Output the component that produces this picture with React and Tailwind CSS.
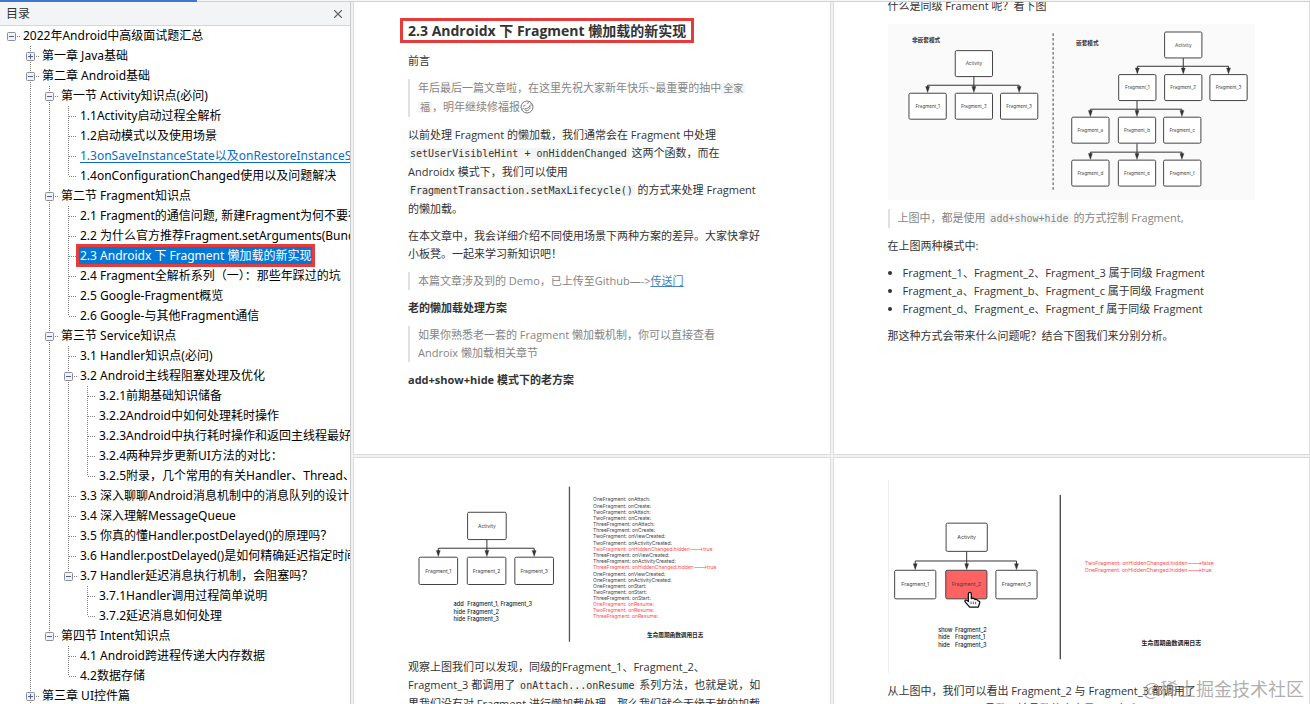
import React, { useState } from "react";
import { X } from "lucide-react";

const OUTLINE = [
  {
    title: "2022年Android中高级面试题汇总",
    children: [
      { title: "第一章 Java基础", collapsed: true },
      {
        title: "第二章 Android基础",
        children: [
          {
            title: "第一节 Activity知识点(必问)",
            children: [
              { title: "1.1Activity启动过程全解析" },
              { title: "1.2启动模式以及使用场景" },
              { title: "1.3onSaveInstanceState以及onRestoreInstanceState使用", hot: true },
              { title: "1.4onConfigurationChanged使用以及问题解决" },
            ],
          },
          {
            title: "第二节 Fragment知识点",
            children: [
              { title: "2.1 Fragment的通信问题, 新建Fragment为何不要在构造方法中传递参数" },
              { title: "2.2 为什么官方推荐Fragment.setArguments(Bundle bundle)" },
              { title: "2.3 Androidx 下 Fragment 懒加载的新实现", selected: true },
              { title: "2.4 Fragment全解析系列（一）：那些年踩过的坑" },
              { title: "2.5 Google-Fragment概览" },
              { title: "2.6 Google-与其他Fragment通信" },
            ],
          },
          {
            title: "第三节 Service知识点",
            children: [
              { title: "3.1 Handler知识点(必问)" },
              {
                title: "3.2 Android主线程阻塞处理及优化",
                children: [
                  { title: "3.2.1前期基础知识储备" },
                  { title: "3.2.2Android中如何处理耗时操作" },
                  { title: "3.2.3Android中执行耗时操作和返回主线程最好的方式" },
                  { title: "3.2.4两种异步更新UI方法的对比：" },
                  { title: "3.2.5附录，几个常用的有关Handler、Thread、Looper" },
                ],
              },
              { title: "3.3 深入聊聊Android消息机制中的消息队列的设计" },
              { title: "3.4 深入理解MessageQueue" },
              { title: "3.5 你真的懂Handler.postDelayed()的原理吗？" },
              { title: "3.6 Handler.postDelayed()是如何精确延迟指定时间的" },
              {
                title: "3.7 Handler延迟消息执行机制，会阻塞吗？",
                children: [
                  { title: "3.7.1Handler调用过程简单说明" },
                  { title: "3.7.2延迟消息如何处理" },
                ],
              },
            ],
          },
          {
            title: "第四节 Intent知识点",
            children: [
              { title: "4.1 Android跨进程传递大内存数据" },
              { title: "4.2数据存储" },
            ],
          },
        ],
      },
      { title: "第三章 UI控件篇", collapsed: true },
      { title: "第四章 网络通信篇", collapsed: true },
    ],
  },
];

const LOG_LINES = [
  { text: "OneFragment: onAttach:" },
  { text: "OneFragment: onCreate:" },
  { text: "TwoFragment: onAttach:" },
  { text: "TwoFragment: onCreate:" },
  { text: "ThreeFragment: onAttach:" },
  { text: "ThreeFragment: onCreate:" },
  { text: "TwoFragment: onViewCreated:" },
  { text: "TwoFragment: onActivityCreated:" },
  { text: "TwoFragment: onHiddenChanged:hidden--->true", red: true },
  { text: "ThreeFragment: onViewCreated:" },
  { text: "ThreeFragment: onActivityCreated:" },
  { text: "ThreeFragment: onHiddenChanged:hidden--->true", red: true },
  { text: "OneFragment: onViewCreated:" },
  { text: "OneFragment: onActivityCreated:" },
  { text: "OneFragment: onStart:" },
  { text: "TwoFragment: onStart:" },
  { text: "ThreeFragment: onStart:" },
  { text: "OneFragment: onResume:", red: true },
  { text: "TwoFragment: onResume:", red: true },
  { text: "ThreeFragment: onResume:", red: true },
];

/* ---------- outline tree ---------- */

// One 19x20 step of dotted guide lines: up / down are the vertical halves,
// across is the stub that leads to the title.
function Guide({ up, down, across }) {
  return (
    <svg width="19" height="20" className="shrink-0" stroke="#808080" strokeDasharray="1 1" aria-hidden="true">
      {up && <path d="M9.5 0V10" />}
      {down && <path d="M9.5 10V20" />}
      {across && <path d="M10 10.5H18" />}
    </svg>
  );
}

function ToggleBox({ open, up, down }) {
  return (
    <svg width="19" height="20" aria-hidden="true">
      <g stroke="#808080" strokeDasharray="1 1">
        {up && <path d="M9.5 0V6" />}
        {down && <path d="M9.5 16V20" />}
        <path d="M15 10.5H19" />
      </g>
      <rect x="5.5" y="6.5" width="8" height="8" rx="1" fill="#f3f3f5" stroke="#8d8d93" />
      <path d="M7 10.5H12" stroke="#4a5fb0" />
      {!open && <path d="M9.5 8V13" stroke="#4a5fb0" />}
    </svg>
  );
}

function TreeNode({ node, rails, last, root }) {
  const [open, setOpen] = useState(!node.collapsed);
  const expandable = node.collapsed || Boolean(node.children);
  const childRails = root ? rails.concat(false) : rails.concat(!last);

  let tone = "text-black";
  if (node.hot) tone = "text-[#0a6cc4] underline underline-offset-2";
  if (node.selected) tone = "bg-[#0078d7] text-white outline-3 outline-[#e53b3b]";

  return (
    <li>
      <div className="flex h-5 items-start">
        {rails.map((on, i) => (
          <Guide key={i} up={on} down={on} />
        ))}
        {expandable ? (
          <button type="button" aria-label={`展开 ${node.title}`} className="shrink-0" onClick={() => setOpen(!open)}>
            <ToggleBox open={open} up={!root} down={!root && !last} />
          </button>
        ) : (
          <Guide up down={!last} across />
        )}
        <a href="#" className={`mt-px ml-px px-px leading-[17px] whitespace-nowrap ${tone}`}>{node.title}</a>
      </div>
      {open && node.children && (
        <ul>
          {node.children.map((child, i) => (
            <TreeNode key={child.title} node={child} rails={childRails} last={i === node.children.length - 1} />
          ))}
        </ul>
      )}
    </li>
  );
}

function Sidebar() {
  return (
    <aside className="flex w-[351px] shrink-0 flex-col overflow-hidden border-r border-[#c8cbce] bg-white font-['Noto_Sans','Noto_Sans_CJK_SC',sans-serif] text-[12px]">
      <header className="flex h-6 shrink-0 items-center justify-between border-b border-[#d5d8da] bg-[#f2f4f6] pr-[5px] pl-1.5 text-[#333]">
        <h1>目录</h1>
        <button type="button" aria-label="关闭目录" className="text-[#666]">
          <X size={14} strokeWidth={2} />
        </button>
      </header>
      <ul className="pl-0.5">
        {OUTLINE.map((node) => (
          <TreeNode key={node.title} node={node} rails={[]} last root />
        ))}
      </ul>
    </aside>
  );
}

/* ---------- document pieces ---------- */

function Page({ className = "", children }) {
  return (
    <article className={`flex flex-col gap-[9px] border-[#dcdcdc] bg-white px-[54px] whitespace-nowrap ${className}`}>
      {children}
    </article>
  );
}

function Quote({ children }) {
  return <blockquote className="border-l-2 border-[#dfe2e5] pl-2 text-[#858585]">{children}</blockquote>;
}

function Code({ children }) {
  return (
    <code className="rounded-xs bg-[#f3f4f4] px-0.5 font-['DejaVu_Sans_Mono','Noto_Sans_CJK_SC',monospace] text-[10px] leading-[19px]">
      {children}
    </code>
  );
}

function LaughIcon() {
  return (
    <svg width="14" height="14" viewBox="0 0 14 14" className="inline-block align-[-3px]" fill="none" stroke="#777" aria-hidden="true">
      <circle cx="7" cy="7" r="6" />
      <path d="M3 6.500l2.500-1.500M7 3.500l2-1M5 8.500c2 .5 4-.5 5-3 .8 3-1.500 5.500-4 5.200-1-.2-1.200-1.200-1-2.200z" strokeWidth=".9" />
      <path d="M2 9.500l2-1.500M10.500 3.500l1 2" strokeWidth=".8" />
    </svg>
  );
}

/* ---------- diagrams ---------- */

function Box({ x, y, w = 112, h = 78, size = 14, fill = "#fff", label }) {
  return (
    <g>
      <rect x={x} y={y} width={w} height={h} rx="4" fill={fill} stroke="#444" strokeWidth="3" />
      <text x={x + w / 2} y={y + h / 2 + 5} fontSize={size} textAnchor="middle" fill="#444">{label}</text>
    </g>
  );
}

// Parent line going down to a bus, then one arrow per target.
function Fork({ x, from, bus, to, targets }) {
  return (
    <g stroke="#333" strokeWidth="3" fill="none">
      <path d={`M${x} ${from}V${bus}M${targets[0]} ${bus}H${targets[targets.length - 1]}`} />
      {targets.map((t) => (
        <g key={t}>
          <path d={`M${t} ${bus}V${to - 12}`} />
          <path d={`M${t - 6} ${to - 20}h12l-6 18z`} fill="#333" strokeWidth="1" />
        </g>
      ))}
    </g>
  );
}

const SVG_FONT = "block w-full font-['Inter','Noto_Sans_CJK_SC',sans-serif]";

function ModesDiagram() {
  return (
    <svg viewBox="0 0 1104 528" className={`${SVG_FONT} bg-[#fafafa]`} role="img" aria-label="非嵌套模式与嵌套模式">
      <text x="72" y="55" fontSize="17" fontWeight="bold" fill="#333">非嵌套模式</text>
      <text x="565" y="62" fontSize="17" fontWeight="bold" fill="#333">嵌套模式</text>
      <path d="M496 28V500" stroke="#444" strokeWidth="3" strokeDasharray="8 6" />

      <Fork x={258} from={158} bus={184} to={208} targets={[119, 258, 394]} />
      <Box x={202} y={80} label="Activity" />
      <Box x={63} y={208} label="Fragment_1" />
      <Box x={202} y={208} label="Fragment_2" />
      <Box x={338} y={208} label="Fragment_3" />

      <Fork x={887} from={102} bus={127} to={152} targets={[749, 887, 1023]} />
      <Fork x={748} from={230} bus={256} to={280} targets={[608, 748, 883]} />
      <Fork x={748} from={358} bus={385} to={409} targets={[608, 748, 883]} />
      <Box x={831} y={24} label="Activity" />
      <Box x={693} y={152} label="Fragment_1" />
      <Box x={831} y={152} label="Fragment_2" />
      <Box x={967} y={152} label="Fragment_3" />
      <Box x={552} y={280} label="Fragment_a" />
      <Box x={692} y={280} label="Fragment_b" />
      <Box x={828} y={280} label="Fragment_c" />
      <Box x={552} y={409} label="Fragment_d" />
      <Box x={692} y={409} label="Fragment_e" />
      <Box x={828} y={409} label="Fragment_f" />
    </svg>
  );
}

function AddDiagram() {
  return (
    <svg viewBox="0 0 1104 531" className={SVG_FONT} role="img" aria-label="add 之后的生命周期">
      <Fork x={237} from={203} bus={229} to={256} targets={[91, 237, 379]} />
      <Box x={179} y={121} w={116} h={82} size={15} label="Activity" />
      <Box x={33} y={256} w={116} h={82} size={15} label="Fragment_1" />
      <Box x={178} y={256} w={116} h={82} size={15} label="Fragment_2" />
      <Box x={321} y={256} w={116} h={82} size={15} label="Fragment_3" />
      <g fontSize="17" fontWeight="500" fill="#222">
        <text x="137" y="404">add</text>
        <text x="178" y="404">Fragment_1, Fragment_3</text>
        <text x="137" y="426">hide</text>
        <text x="178" y="426">Fragment_2</text>
        <text x="137" y="448">hide</text>
        <text x="178" y="448">Fragment_3</text>
      </g>
      <path d="M485 44V510" stroke="#555" strokeWidth="4" />
      {LOG_LINES.map((line, i) => (
        <text key={line.text} x="556" y={88 + Math.round(i * 18.55)} fontSize="15" fill={line.red ? "#ff4d4f" : "#444"}>
          {line.text}
        </text>
      ))}
      <text x="718" y="497" fontSize="17" fontWeight="bold" fill="#222">生命周期函数调用日志</text>
    </svg>
  );
}

function ShowDiagram() {
  return (
    <svg viewBox="0 0 1104 582" className={`${SVG_FONT} border-l border-[#eee]`} role="img" aria-label="show 之后的生命周期">
      <Fork x={234} from={215} bus={244} to={272} targets={[79, 234, 384]} />
      <Box x={172} y={130} w={124} h={85} size={16} label="Activity" />
      <Box x={17} y={272} w={124} h={86} size={16} label="Fragment_1" />
      <Box x={171} y={272} w={124} h={86} size={16} fill="#ff6263" label="Fragment_2" />
      <Box x={322} y={272} w={124} h={86} size={16} label="Fragment_3" />
      <path
        d="M239 366v-22c0-7 9-7 9 0v13c8-2 10 0 11 3 6-1 8 1 9 4 5 0 6 3 5 7l-4 12h-26l-13-15c-4-5 2-10 9-2z"
        fill="#fff"
        stroke="#111"
        strokeWidth="4"
        strokeLinejoin="round"
      />
      <path d="M247 366v8M254 366v8M261 367v7" stroke="#111" strokeWidth="2" />
      <g fontSize="17" fontWeight="500" fill="#222">
        <text x="148" y="457">show</text>
        <text x="199" y="457">Fragment_2</text>
        <text x="148" y="480">hide</text>
        <text x="199" y="480">Fragment_1</text>
        <text x="148" y="503">hide</text>
        <text x="199" y="503">Fragment_3</text>
      </g>
      <path d="M516 45V540" stroke="#444" strokeWidth="4" />
      <text x="590" y="257" fontSize="16" fill="#ff4d4f">TwoFragment: onHiddenChanged:hidden--->false</text>
      <text x="590" y="277" fontSize="16" fill="#ff4d4f">OneFragment: onHiddenChanged:hidden--->true</text>
      <text x="761" y="496" fontSize="18" fontWeight="bold" fill="#222">生命周期函数调用日志</text>
    </svg>
  );
}

/* ---------- reader ---------- */

function Reader() {
  return (
    <main className="grid min-w-0 flex-1 auto-rows-max grid-cols-2 gap-0.5 overflow-hidden bg-[#f1f1f1] pl-0.5 font-['Open_Sans','Noto_Sans_CJK_SC',sans-serif] text-[11px] leading-[18px] text-[#333]">
      <Page className="border-x border-b pt-4 pb-[65px]">
        <h2 className="-ml-2 w-fit border-3 border-[#e53b3b] px-[5px] text-[14px] leading-[19px] font-bold">
          2.3 Androidx 下 Fragment 懒加载的新实现
        </h2>
        <p>前言</p>
        <Quote>
          年后最后一篇文章啦，在这里先祝大家新年快乐~最重要的抽中<Code>全家</Code>
          <br />
          <Code>福</Code>，明年继续修福报<LaughIcon />
        </Quote>
        <p>
          以前处理 Fragment 的懒加载，我们通常会在 Fragment 中处理
          <br />
          <Code>setUserVisibleHint + onHiddenChanged</Code> 这两个函数，而在
          <br />
          Androidx 模式下，我们可以使用
          <br />
          <Code>FragmentTransaction.setMaxLifecycle()</Code> 的方式来处理 Fragment
          <br />
          的懒加载。
        </p>
        <p>
          在本文章中，我会详细介绍不同使用场景下两种方案的差异。大家快拿好
          <br />
          小板凳。一起来学习新知识吧！
        </p>
        <Quote>
          本篇文章涉及到的 Demo，已上传至Github—-&gt;<a href="#" className="text-[#4183c4] underline">传送门</a>
        </Quote>
        <h3 className="font-bold">老的懒加载处理方案</h3>
        <Quote>
          如果你熟悉老一套的 Fragment 懒加载机制，你可以直接查看
          <br />
          Androix 懒加载相关章节
        </Quote>
        <h3 className="font-bold">add+show+hide 模式下的老方案</h3>
      </Page>

      <Page className="overflow-hidden border-x border-b">
        <p className="-mt-[5px]">什么是同级 Frament 呢？看下图</p>
        <ModesDiagram />
        <Quote>
          上图中，都是使用 <Code>add+show+hide</Code> 的方式控制 Fragment,
        </Quote>
        <p>在上图两种模式中:</p>
        <ul className="list-disc pl-[15px]">
          <li>Fragment_1、Fragment_2、Fragment_3 属于同级 Fragment</li>
          <li>Fragment_a、Fragment_b、Fragment_c 属于同级 Fragment</li>
          <li>Fragment_d、Fragment_e、Fragment_f 属于同级 Fragment</li>
        </ul>
        <p>那这种方式会带来什么问题呢？结合下图我们来分别分析。</p>
      </Page>

      <Page className="border-x border-t pt-3.5">
        <AddDiagram />
        <p>
          观察上图我们可以发现，同级的Fragment_1、Fragment_2、
          <br />
          Fragment_3 都调用了 <Code>onAttach...onResume</Code> 系列方法，也就是说，如
          <br />
          果我们没有对 Fragment 进行懒加载处理，那么我们就会无缘无故的加载
        </p>
      </Page>

      <Page className="border-x border-t pt-[22px]">
        <ShowDiagram />
        <p>
          从上图中，我们可以看出 Fragment_2 与 Fragment_3 都调用了
          <br />
          <Code>onHiddenChanged</Code> 函数，该函数的内容是 Log 打印
        </p>
      </Page>
    </main>
  );
}

export default function App() {
  return (
    <div className="relative flex h-screen flex-col overflow-hidden bg-white">
      <div className="h-0.5 shrink-0 border-b border-[#cfd3d6] bg-[#f4f5f6]">
        <div className="h-0.5 w-[15%] bg-[#3f78cf]" />
      </div>
      <div className="flex min-h-0 flex-1">
        <Sidebar />
        <Reader />
      </div>
      <p className="pointer-events-none absolute right-1.5 bottom-1 font-['Noto_Sans_CJK_SC',sans-serif] text-[18px] leading-6 text-[#8c8c8c]/70">
        @稀土掘金技术社区
      </p>
    </div>
  );
}
